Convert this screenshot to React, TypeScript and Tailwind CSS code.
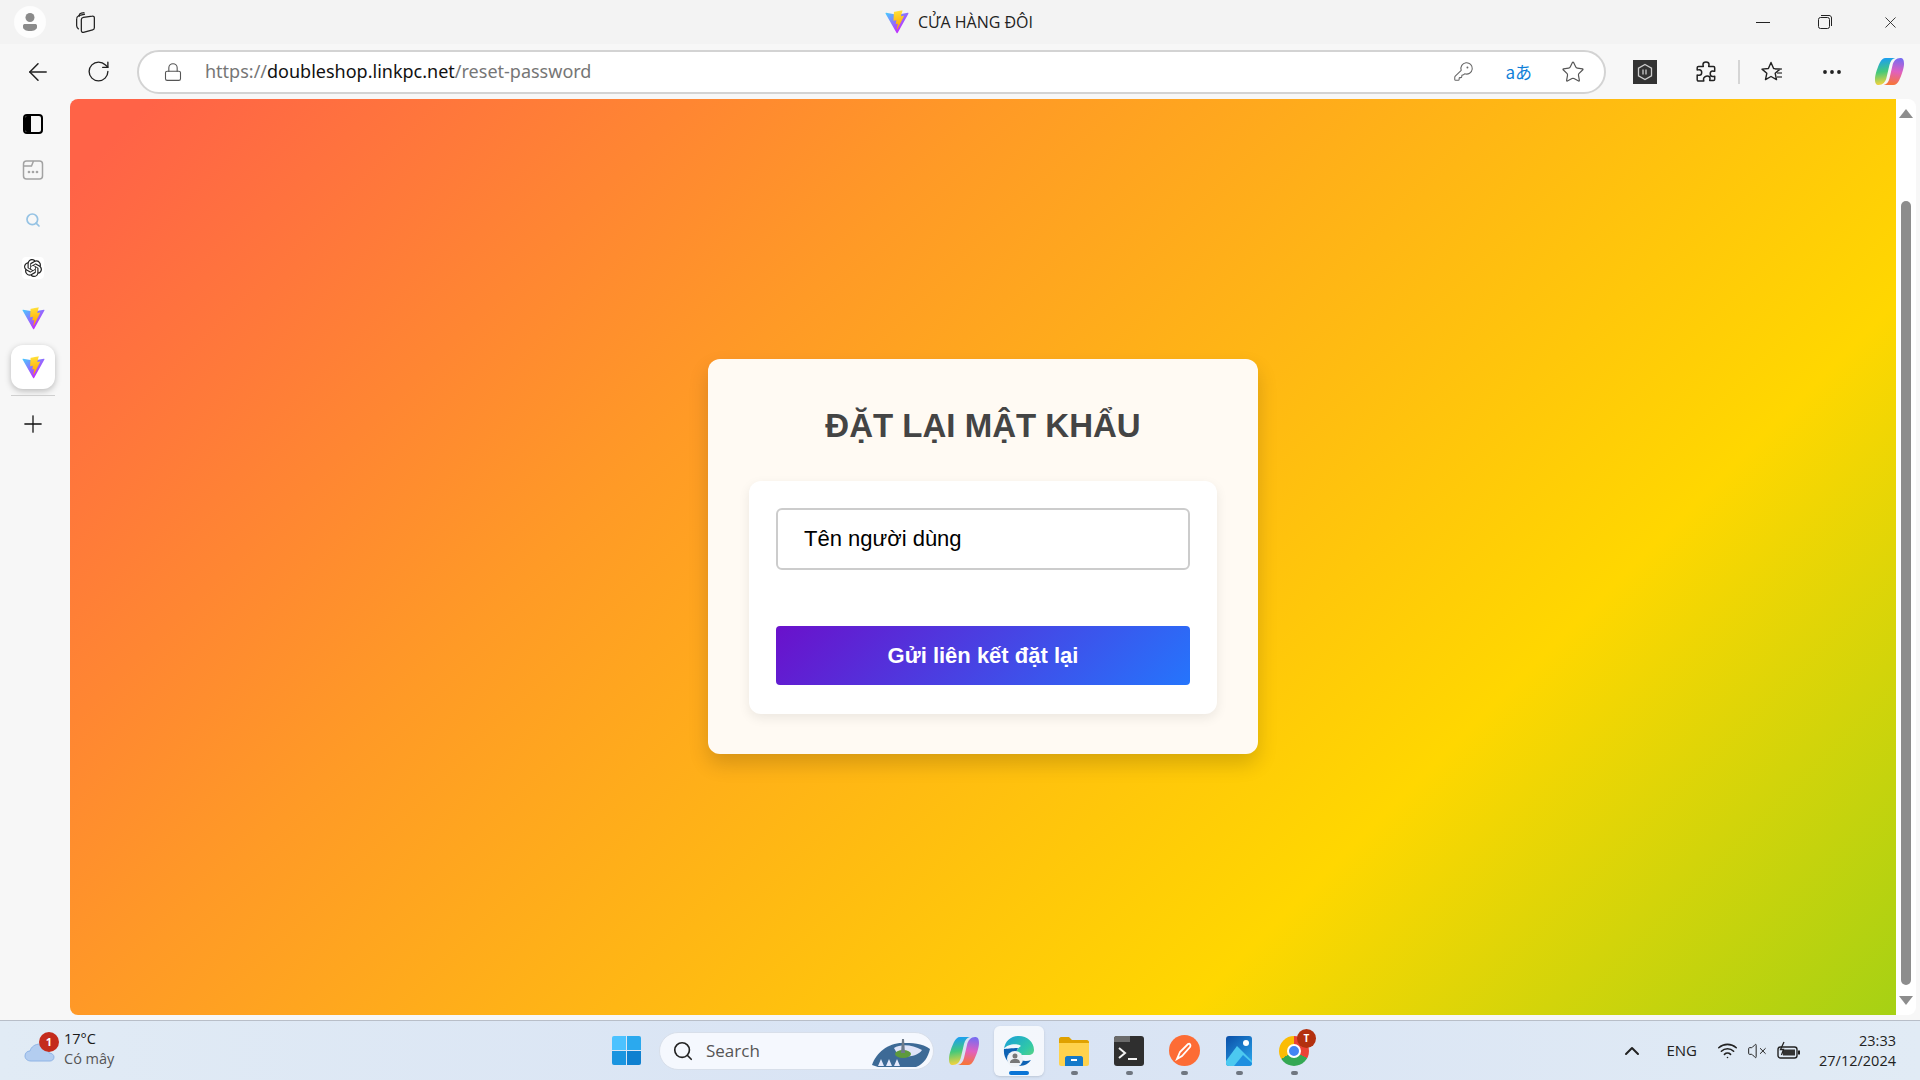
import { ArrowLeft, ChevronUp, KeyRound, Lock, MoreHorizontal, Plus, RotateCw, Search, Star, VolumeX, Wifi, X } from 'lucide-react';
import { SiOpenai } from 'react-icons/si';

function ViteLogo({ id, size = 22 }: { id: string; size?: number }) {
  return (
    <svg width={size} height={size} viewBox="0 0 410 404" fill="none">
      <path
        d="M399.641 59.5246L215.643 388.545C211.844 395.338 202.084 395.378 198.228 388.618L10.5817 59.5563C6.38087 52.1896 12.6802 43.2665 21.0281 44.7586L205.223 77.6824C206.398 77.8924 207.601 77.8904 208.776 77.6763L389.119 44.8058C397.439 43.2894 403.768 52.1434 399.641 59.5246Z"
        fill={`url(#${id}a)`}
      />
      <path
        d="M292.965 1.5744L156.801 28.2552C154.563 28.6937 152.906 30.5903 152.771 32.8664L144.395 174.33C144.198 177.662 147.258 180.248 150.51 179.498L188.42 170.749C191.967 169.931 195.172 173.055 194.443 176.622L183.18 231.775C182.422 235.487 185.907 238.661 189.532 237.56L212.947 230.446C216.577 229.344 220.065 232.527 219.297 236.242L201.398 322.875C200.278 328.294 207.486 331.249 210.492 326.603L212.5 323.5L323.454 102.072C325.312 98.3645 322.108 94.137 318.036 94.9228L279.014 102.454C275.347 103.161 272.227 99.746 273.262 96.1583L298.731 7.86689C299.767 4.27314 296.636 0.855181 292.965 1.5744Z"
        fill={`url(#${id}b)`}
      />
      <defs>
        <linearGradient id={`${id}a`} x1="6" y1="33" x2="235" y2="344" gradientUnits="userSpaceOnUse">
          <stop stopColor="#41D1FF" />
          <stop offset="1" stopColor="#BD34FE" />
        </linearGradient>
        <linearGradient id={`${id}b`} x1="194" y1="8" x2="236" y2="293" gradientUnits="userSpaceOnUse">
          <stop stopColor="#FFEA83" />
          <stop offset="0.08" stopColor="#FFDD35" />
          <stop offset="1" stopColor="#FFA800" />
        </linearGradient>
      </defs>
    </svg>
  );
}

function Copilot({ id, size = 30 }: { id: string; size?: number }) {
  return (
    <svg width={size} height={size} viewBox="0 0 32 32" fill="none">
      <defs>
        <linearGradient id={`${id}a`} x1="8" y1="3" x2="12" y2="29" gradientUnits="userSpaceOnUse">
          <stop stopColor="#1c9ff0" />
          <stop offset="0.5" stopColor="#45c97a" />
          <stop offset="1" stopColor="#f6d33c" />
        </linearGradient>
        <linearGradient id={`${id}b`} x1="24" y1="3" x2="20" y2="29" gradientUnits="userSpaceOnUse">
          <stop stopColor="#7a6cf0" />
          <stop offset="0.5" stopColor="#e060c0" />
          <stop offset="1" stopColor="#f6743c" />
        </linearGradient>
      </defs>
      <path d="M12 2h10c-3 .5-5 3-6 7l-3 13c-1 5-4 8-8 8-3 0-4-2-4-6 0-5 3-13 5-17 1.500-3 3.500-5 6-5z" fill={`url(#${id}a)`} />
      <path d="M20 30H10c3-.5 5-3 6-7l3-13c1-5 4-8 8-8 3 0 4 2 4 6 0 5-3 13-5 17-1.500 3-3.500 5-6 5z" fill={`url(#${id}b)`} />
    </svg>
  );
}

function TaskIcon({ children, active = false, dot = true }: { children: React.ReactNode; active?: boolean; dot?: boolean }) {
  return (
    <div className={`relative flex h-[50px] w-[50px] items-center justify-center rounded-md ${active ? 'bg-white/70 shadow-sm' : ''}`}>
      {children}
      {active && <div className="absolute bottom-[1px] h-[4px] w-[20px] rounded-full bg-[#0a74d6]" />}
      {!active && dot && <div className="absolute bottom-[1px] h-[4px] w-[7px] rounded-full bg-[#6f7680]" />}
    </div>
  );
}

export default function App() {
  return (
    <div className="flex h-screen w-full flex-col overflow-hidden bg-[#f7f7f7] font-['Open_Sans',sans-serif] text-black">
      {/* Title bar */}
      <div className="relative flex h-[44px] shrink-0 items-center bg-[#f3f3f3]">
        <div className="ml-[14px] flex h-[32px] w-[32px] items-center justify-center rounded-full bg-white/80">
          <svg width="20" height="22" viewBox="0 0 20 22" fill="#8a8a8a">
            <circle cx="10" cy="6.500" r="4.500" />
            <path d="M3 14.500c0-1 1-1.500 2-1.500h10c1 0 2 .5 2 1.500V16c0 2.500-3 4-7 4s-7-1.500-7-4z" />
          </svg>
        </div>
        <svg className="ml-[27px]" width="25" height="25" viewBox="0 0 24 24" fill="none" stroke="#222" strokeWidth="1.200" strokeLinejoin="round">
          <path d="M6 6.500V5c0-1 .8-1.800 2-2l3-.5" />
          <path d="M3.500 8.500c0-1.500 1-2.500 2-3l6-1.500" />
          <path d="M3.500 8.500V15c0 1.500 1 2.500 2 3.500" />
          <path d="M8 9c0-1 .8-1.800 2-2l8.500-1.200c1.200-.2 2 .6 2 1.700v9.500c0 1-.6 1.800-1.600 2L10 21.500c-1.200.2-2-.6-2-1.700z" />
        </svg>
        <div className="absolute left-[885px] top-[10px] flex items-center">
          <ViteLogo id="tb" size={24} />
          <span className="ml-[9px] text-[16px] text-[#222]">CỬA HÀNG ĐÔI</span>
        </div>
        <div className="ml-auto flex items-center pr-[20px]">
          <div className="mr-[48px] h-[1px] w-[14px] bg-[#222]" />
          <svg className="mr-[49px]" width="14" height="14" viewBox="0 0 14 14" fill="none" stroke="#222" strokeWidth="1">
            <rect x="0.500" y="2.500" width="11" height="11" rx="2" />
            <path d="M3 .5h8c1.500 0 2.500 1 2.500 2.500v8" />
          </svg>
          <X size={19} strokeWidth={1.100} color="#222" />
        </div>
      </div>

      {/* Toolbar */}
      <div className="flex h-[55px] shrink-0 items-center bg-[#f7f7f7]">
        <ArrowLeft className="ml-[24px] shrink-0" size={28} strokeWidth={1.300} color="#222" />
        <RotateCw className="ml-[34px] shrink-0" size={25} strokeWidth={1.300} color="#222" />
        <div className="ml-[26px] flex h-[44px] w-[1469px] shrink-0 items-center rounded-full border-2 border-[#d3d3d3] bg-white">
          <Lock className="ml-[24px]" size={20} strokeWidth={1.300} color="#555" />
          <div className="ml-[22px] font-['Noto_Sans',sans-serif] text-[18px] text-[#767676]">
            https://<span className="text-[#111]">doubleshop.linkpc.net</span>/reset-password
          </div>
          <KeyRound className="ml-auto" size={21} strokeWidth={1.200} color="#666" />
          <div className="ml-[31px] whitespace-nowrap font-['Noto_Sans_CJK_JP','Noto_Sans',sans-serif] text-[17px] leading-none text-[#0f7fd8]">aあ</div>
          <Star className="ml-[29px] mr-[19px]" size={24} strokeWidth={1.200} color="#555" />
        </div>
        <div className="ml-[27px] flex h-[24px] w-[24px] shrink-0 items-center justify-center bg-[#333]">
          <svg width="18" height="18" viewBox="0 0 18 18" fill="none" stroke="#ccc" strokeWidth="1.300">
            <path d="M9 1.500l6.500 3.700v7.600L9 16.500l-6.500-3.700V5.200z" />
            <path d="M7 6.500v5M10 6.500v5" />
          </svg>
        </div>
        <svg className="ml-[37px] shrink-0" width="24" height="24" viewBox="0 0 24 24" fill="none" stroke="#222" strokeWidth="1.500" strokeLinejoin="round">
          <path d="M9 4.500c0-1.500 1.300-2.500 3-2.500s3 1 3 2.500c0 .8-.3 1.300-.3 2h4.800c.8 0 1.200.5 1.200 1.200v3.600c-.6 0-1.200-.3-2-.3-1.500 0-2.500 1.200-2.500 2.800s1 2.800 2.500 2.800c.8 0 1.400-.3 2-.3v3c0 .7-.5 1.200-1.200 1.200h-3.800c0-.7.300-1.300.3-2 0-1.500-1.200-2.500-2.700-2.500S9.500 17.500 9.500 19c0 .7.300 1.300.3 2H4.500c-.8 0-1.300-.5-1.300-1.200V15c.6 0 1.200.3 2 .3 1.500 0 2.500-1.200 2.500-2.800s-1-2.800-2.500-2.800c-.8 0-1.400.3-2 .3V7.700c0-.7.500-1.200 1.300-1.200h4.800c0-.7-.3-1.200-.3-2z" />
        </svg>
        <div className="ml-[20px] h-[24px] w-[2px] shrink-0 bg-[#d5d5d5]" />
        <svg className="ml-[20px] shrink-0" width="24" height="24" viewBox="0 0 24 24" fill="none" stroke="#222" strokeWidth="1.400" strokeLinejoin="round">
          <path d="M11 2.500l2.600 6 6.400.6-4.800 4.200 1.300 6.300L11 16.500l-5.500 3.100 1.300-6.300L2 9.100l6.400-.6z" />
          <path d="M15 9h7M17 13h5M17 17h5" stroke="#555" />
        </svg>
        <MoreHorizontal className="ml-[36px] shrink-0" size={24} strokeWidth={1.800} color="#222" />
        <div className="ml-[30px] shrink-0">
          <Copilot id="cp1" size={31} />
        </div>
      </div>

      {/* Middle */}
      <div className="flex min-h-0 flex-1 pb-[5px]">
        <div className="flex w-[70px] shrink-0 flex-col items-center bg-[#f7f7f7] pr-[4px] pt-[15px]">
          <div className="relative flex h-[20px] w-[20px] overflow-hidden rounded-[4px] border-2 border-black">
            <div className="w-[6px] bg-black" />
          </div>
          <svg className="mt-[25px]" width="22" height="22" viewBox="0 0 22 22" fill="none" stroke="#a3a3a3" strokeWidth="1.500">
            <rect x="1.500" y="2" width="19" height="18" rx="3" />
            <path d="M1.500 7h8l2-5" />
            <circle cx="7" cy="13" r=".6" fill="#a3a3a3" />
            <circle cx="11" cy="13" r=".6" fill="#a3a3a3" />
            <circle cx="15" cy="13" r=".6" fill="#a3a3a3" />
          </svg>
          <Search className="mt-[31px]" size={16} strokeWidth={2.600} color="#96c3e4" />
          <div className="mt-[29px] flex h-[22px] w-[22px] items-center justify-center rounded-[4px] bg-white">
            <SiOpenai size={18} color="#222" />
          </div>
          <div className="mt-[28px]">
            <ViteLogo id="sb1" size={23} />
          </div>
          <div className="mt-[15px] flex h-[44px] w-[44px] items-center justify-center rounded-xl bg-white shadow-[0_2px_6px_rgba(0,0,0,0.25)]">
            <ViteLogo id="sb2" size={23} />
          </div>
          <div className="mt-[6px] h-[1px] w-[44px] bg-[#cfcfcf]" />
          <Plus className="mt-[14px]" size={28} strokeWidth={1.100} color="#111" />
        </div>

        <div className="flex min-w-0 flex-1 items-center justify-center rounded-l-[8px] bg-[linear-gradient(135deg,#ff6347_3%,#ff9a26_34%,#ffd700_74%,#a6d114_100%)]">
          <div className="mt-[-2px] flex h-[395px] w-[550px] flex-col rounded-xl bg-[#fffaf3] px-[41px] pt-[49px] shadow-[0_10px_20px_rgba(0,0,0,0.16)]">
            <h1 className="text-center font-['Liberation_Sans',sans-serif] text-[33px] font-bold leading-[36px] text-[#444]">ĐẶT LẠI MẬT KHẨU</h1>
            <div className="mt-[37px] flex h-[233px] flex-col rounded-xl bg-white px-[27px] pt-[27px] shadow-[0_4px_12px_rgba(0,0,0,0.08)]">
              <div className="flex h-[62px] items-center rounded-[6px] border-2 border-[#ccc] px-[26px] font-['Liberation_Sans',sans-serif] text-[22px] text-black">
                Tên người dùng
              </div>
              <button className="mt-[56px] h-[59px] rounded-[4px] bg-[linear-gradient(135deg,#6a11cb,#2575fc)] font-['Liberation_Sans',sans-serif] text-[22px] font-bold text-white">
                Gửi liên kết đặt lại
              </button>
            </div>
          </div>
        </div>

        {/* Scrollbar */}
        <div className="mr-[4px] flex w-[20px] shrink-0 flex-col items-center rounded-r-[8px] bg-white pt-[10px]">
          <div className="h-0 w-0 border-x-[7px] border-b-[9px] border-x-transparent border-b-[#8d8d8d]" />
          <div className="mt-[83px] w-[10px] flex-1 rounded-full bg-[#8d8d8d]" />
          <div className="mb-[10px] mt-[11px] h-0 w-0 border-x-[7px] border-t-[9px] border-x-transparent border-t-[#8d8d8d]" />
        </div>
      </div>

      {/* Taskbar */}
      <div className="flex h-[60px] shrink-0 items-center border-t border-[#b8bec8] bg-[linear-gradient(90deg,#e1ebf5,#d8e3f4_50%,#e1ebf5)]">
        <div className="relative flex w-[612px] shrink-0 items-center pl-[24px]">
          <svg width="32" height="24" viewBox="0 0 32 24" fill="#b3cdf0" stroke="#8fb4e6" strokeWidth="1">
            <path d="M7 22c-4 0-6-2.500-6-5 0-3 2-5 5-5 1-4 5-7 10-7 5 0 9 4 9 9 3 0 5 2 5 4 0 2.500-2 4-4 4z" />
          </svg>
          <div className="absolute left-[39px] top-[0px] flex h-[20px] w-[20px] items-center justify-center rounded-full bg-[#c42b1c] text-[11px] font-bold text-white">1</div>
          <div className="ml-[8px] mt-[-3px] text-[14.500px] leading-[20px]">
            <div className="text-[#1a1a1a]">17°C</div>
            <div className="text-[#555]">Có mây</div>
          </div>
        </div>

        <div className="flex items-center">
          <div className="grid h-[29px] w-[29px] grid-cols-2 gap-[1px]">
            <div className="rounded-tl-[2px] bg-[#4cc2ff]" />
            <div className="rounded-tr-[2px] bg-[#2ba9ee]" />
            <div className="rounded-bl-[2px] bg-[#1a95e0]" />
            <div className="rounded-br-[2px] bg-[#0f80d0]" />
          </div>
          <div className="relative ml-[18px] flex h-[38px] w-[275px] items-center rounded-full border border-[#d8dfea] bg-[#f5f8fe] pl-[12px]">
            <Search size={22} strokeWidth={1.800} color="#222" />
            <span className="ml-[12px] text-[17px] text-[#555]">Search</span>
            <svg className="absolute right-[1px] top-[2px]" width="62" height="33" viewBox="0 0 62 33">
              <path d="M2 30C6 18 18 8 32 8c10 0 20 0 28 6-2 8-6 15-14 18H8z" fill="#3d6a96" />
              <path d="M24 13c6-4 18-4 28 2-4 6-14 8-24 5z" fill="#dfe4f8" />
              <ellipse cx="33" cy="19" rx="8" ry="4" fill="#5e9a3c" />
              <path d="M31 18l1-14 2 0 1 14z" fill="#6f7b8a" />
              <path d="M8 31l3-7 3 7zM16 31l3-7 3 7zM24 31l3-7 3 7z" fill="#e5e9fb" />
            </svg>
          </div>
          <div className="ml-[5px] flex items-center gap-[5px]">
            <TaskIcon dot={false}>
              <Copilot id="cp2" size={32} />
            </TaskIcon>
            <TaskIcon active>
              <svg width="34" height="34" viewBox="0 0 34 34">
                <defs>
                  <linearGradient id="edg" x1="4" y1="2" x2="30" y2="30" gradientUnits="userSpaceOnUse">
                    <stop stopColor="#1aa0d8" />
                    <stop offset="0.6" stopColor="#30c8a8" />
                    <stop offset="1" stopColor="#6fd86f" />
                  </linearGradient>
                </defs>
                <path d="M2 15C3 7 9 2 17 2c8 0 15 6 15 14 0 3-2 5-6 5H14c0-5 3-8 5-9-4-3-14-2-17 3z" fill="url(#edg)" />
                <path d="M2 15c-1 9 5 17 15 17 6 0 10-3 12-6-5 2-11 1-13-3-2-3-2-6 0-9-6 0-12 1-14 1z" fill="#0d62b4" />
                <circle cx="13" cy="25" r="8" fill="#eef2f6" />
                <circle cx="13" cy="22" r="2.500" fill="#777" />
                <path d="M8 29c0-3 2-4 5-4s5 1 5 4z" fill="#777" />
              </svg>
            </TaskIcon>
            <TaskIcon>
              <svg width="32" height="30" viewBox="0 0 32 30">
                <path d="M1 3c0-1 1-2 2-2h8l3 3h15c1 0 2 1 2 2v4H1z" fill="#e0a100" />
                <path d="M1 7h30v21c0 1-1 2-2 2H3c-1 0-2-1-2-2z" fill="#ffd24d" />
                <path d="M9 20h14c1 0 2 1 2 2v8H7v-8c0-1 1-2 2-2z" fill="#1479c9" />
                <rect x="13" y="23" width="6" height="2" fill="#fff" />
              </svg>
            </TaskIcon>
            <TaskIcon>
              <div className="flex h-[30px] w-[30px] flex-col overflow-hidden rounded-[3px] bg-[#2f2f2f]">
                <div className="h-[6px] w-[16px] bg-[#6b6b6b]" />
                <svg width="30" height="24" viewBox="0 0 30 24" fill="none" stroke="#f2f2f2" strokeWidth="2">
                  <path d="M5 6l6 5-6 5" />
                  <path d="M14 17h9" />
                </svg>
              </div>
            </TaskIcon>
            <TaskIcon>
              <div className="flex h-[31px] w-[31px] items-center justify-center rounded-full bg-[#fd6c35]">
                <svg width="20" height="20" viewBox="0 0 20 20" fill="none" stroke="#fff" strokeWidth="1.800">
                  <path d="M3 18l5-3 8-9c1-2 0-4-2-3L6 11z" />
                </svg>
              </div>
            </TaskIcon>
            <TaskIcon>
              <svg width="26" height="30" viewBox="0 0 26 30">
                <defs>
                  <linearGradient id="pho" x1="0" y1="0" x2="26" y2="30" gradientUnits="userSpaceOnUse">
                    <stop stopColor="#0a4fa8" />
                    <stop offset="1" stopColor="#2ba9ee" />
                  </linearGradient>
                </defs>
                <rect width="26" height="30" rx="3" fill="url(#pho)" />
                <circle cx="20" cy="7" r="3" fill="#fff" />
                <path d="M0 25l11-15 15 15v2a3 3 0 0 1-3 3H3a3 3 0 0 1-3-3z" fill="#4cc9f0" />
                <path d="M8 30l9-11 9 8v0a3 3 0 0 1-3 3z" fill="#1f8fe0" />
              </svg>
            </TaskIcon>
            <TaskIcon>
              <div className="relative">
                <div className="h-[30px] w-[30px] rounded-full bg-[conic-gradient(#ea4335_0_33%,#34a853_33%_66%,#fbbc05_66%_100%)]" />
                <div className="absolute left-[8px] top-[8px] h-[14px] w-[14px] rounded-full border-2 border-white bg-[#4285f4]" />
                <div className="absolute right-[-7px] top-[-7px] flex h-[19px] w-[19px] items-center justify-center rounded-full bg-[#b3300f] text-[10px] font-bold text-white">T</div>
              </div>
            </TaskIcon>
          </div>
        </div>

        <div className="ml-auto flex items-center pr-[24px]">
          <ChevronUp size={24} strokeWidth={2} color="#222" />
          <span className="ml-[22px] text-[15px] text-[#222]">ENG</span>
          <Wifi className="ml-[20px]" size={21} strokeWidth={1.800} color="#222" />
          <VolumeX className="ml-[9px]" size={20} strokeWidth={1.200} color="#222" />
          <svg className="ml-[10px]" width="24" height="20" viewBox="0 0 24 20" fill="none">
            <rect x="1" y="6" width="19" height="11" rx="2.500" stroke="#222" strokeWidth="1.400" />
            <rect x="6" y="8.500" width="12" height="6" fill="#333" />
            <rect x="21" y="9.500" width="2" height="4" fill="#222" />
            <path d="M7 1L3.500 8.500h3L4.500 14" stroke="#222" strokeWidth="1.300" />
          </svg>
          <div className="ml-[18px] text-right text-[14.500px] leading-[20px] text-[#222]">
            <div>23:33</div>
            <div>27/12/2024</div>
          </div>
        </div>
      </div>
    </div>
  );
}
